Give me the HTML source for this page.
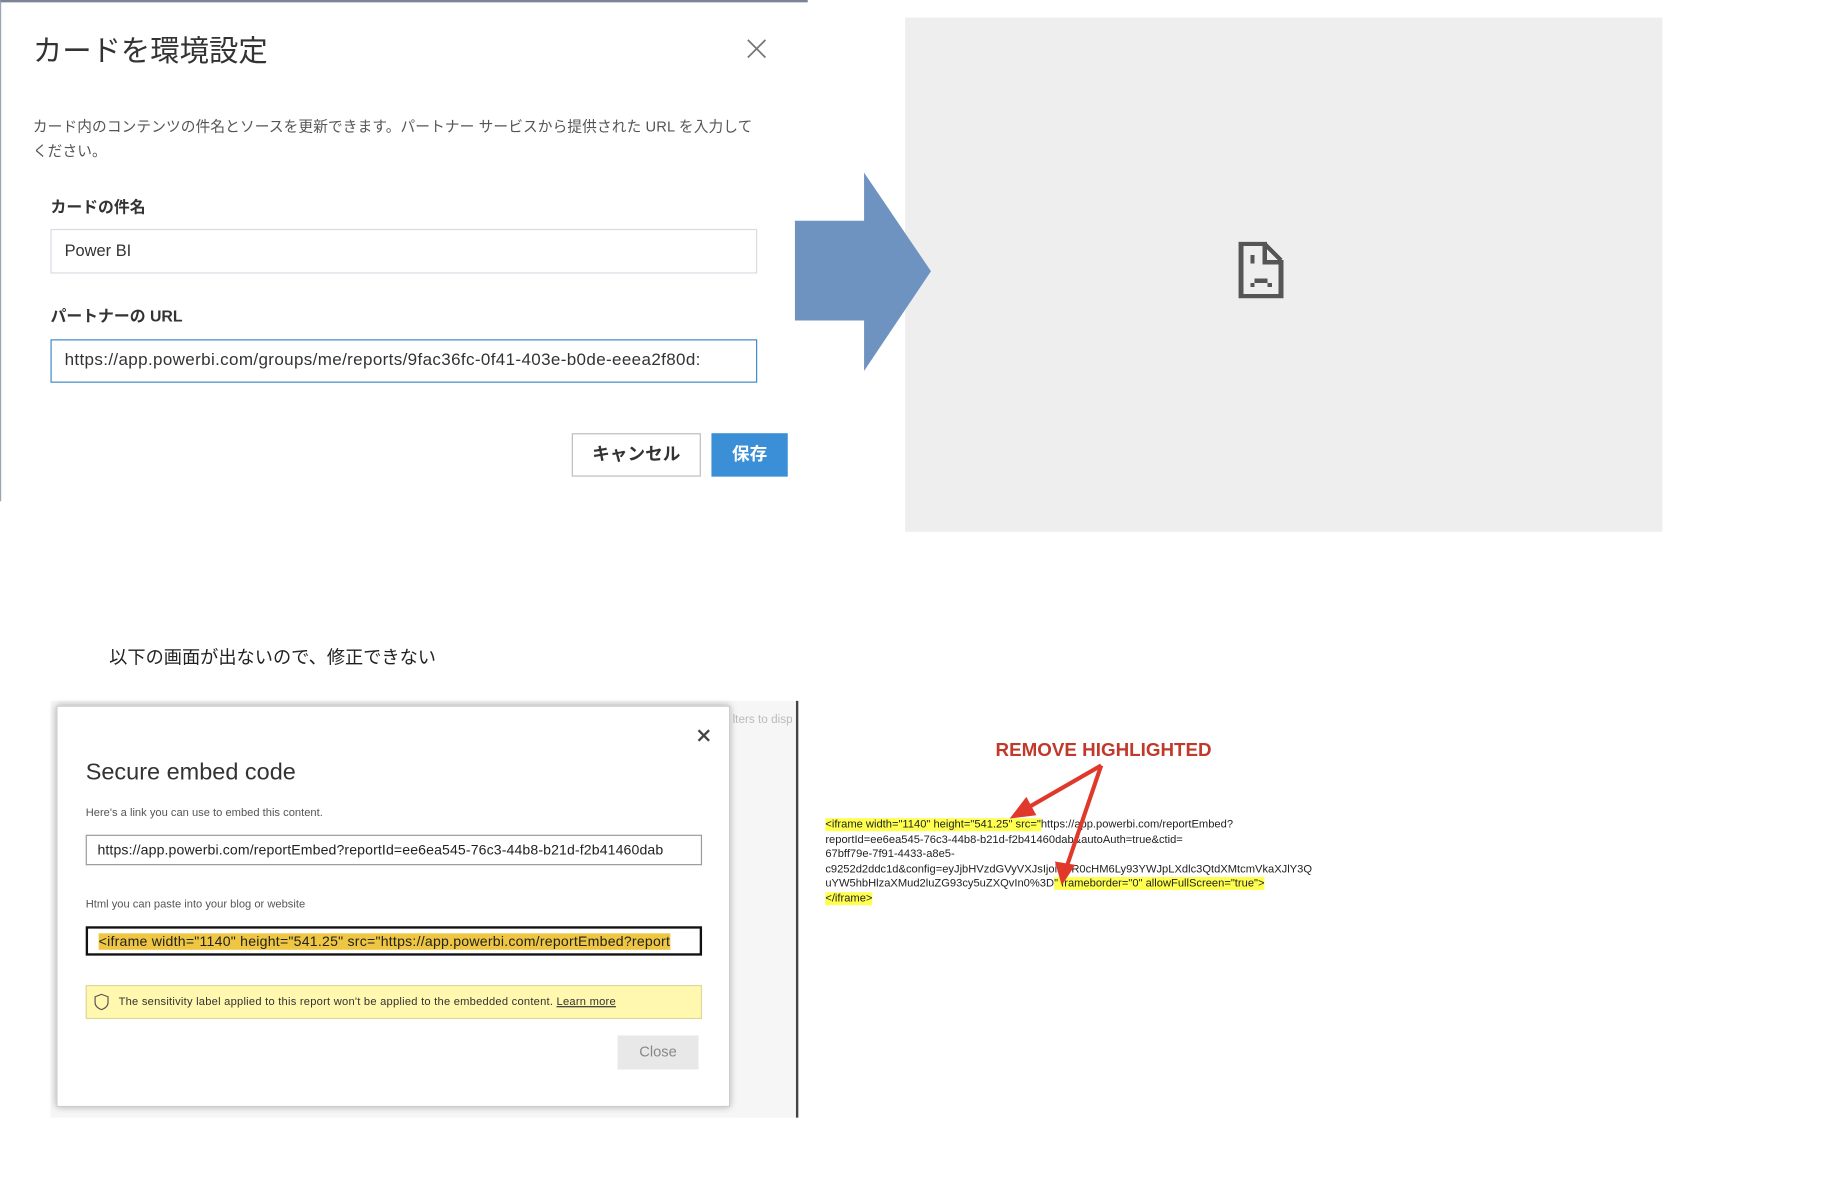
<!DOCTYPE html>
<html><head><meta charset="utf-8"><style>
html,body{margin:0;padding:0;background:#fff;width:1840px;height:1179px;overflow:hidden}
#s{position:absolute;left:0;top:0;width:1570px;height:1005px;transform:scale(1.174);transform-origin:0 0;font-family:"Liberation Sans","Noto Sans CJK JP",sans-serif;color:#333}
.a{position:absolute;white-space:nowrap}
.inp{position:absolute;box-sizing:border-box;background:#fff;overflow:hidden;white-space:nowrap}
</style></head><body><div id="s">
<div class="a" style="left:0;top:0;width:688px;height:427px;background:#fff;border-left:1px solid #9aa4b2;border-top:2px solid #7a8494;box-sizing:border-box"></div>
<div class="a" style="left:28px;top:24px;font-size:25px;color:#333">カードを環境設定</div>
<svg class="a" style="left:636px;top:33px" width="17" height="17"><path d="M1 1L16 16M16 1L1 16" stroke="#777" stroke-width="1.5"/></svg>
<div class="a" style="left:28px;top:98px;font-size:12.5px;color:#555;line-height:21px;letter-spacing:0.1px">カード内のコンテンツの件名とソースを更新できます。パートナー サービスから提供された URL を入力して<br>ください。</div>
<div class="a" style="left:43px;top:165px;font-size:13.5px;font-weight:bold;color:#333">カードの件名</div>
<div class="inp" style="left:43px;top:195px;width:602px;height:38px;border:1px solid #d7dce2;padding:9px 11px;font-size:14px;color:#333">Power BI</div>
<div class="a" style="left:43px;top:258px;font-size:13.5px;font-weight:bold;color:#333">パートナーの URL</div>
<div class="inp" style="left:43px;top:289px;width:602px;height:37px;border:1px solid #3d86c6;padding:9px 11px;font-size:14.5px;color:#333;letter-spacing:0.3px">https://app.powerbi.com/groups/me/reports/9fac36fc-0f41-403e-b0de-eeea2f80d:</div>
<div class="a" style="left:487px;top:369px;width:110px;height:37px;box-sizing:border-box;border:1px solid #bbb;background:#fff;font-size:15px;font-weight:bold;text-align:center;line-height:35px;color:#333">キャンセル</div>
<div class="a" style="left:606px;top:369px;width:65px;height:37px;background:#3a8fd6;color:#fff;font-size:15px;font-weight:bold;text-align:center;line-height:37px">保存</div>
<div class="a" style="left:771px;top:15px;width:645px;height:438px;background:#eeeeee"></div>
<svg class="a" style="left:677px;top:146px" width="118" height="172"><path d="M0 42H59V1L116 85L59 170V127H0Z" fill="#6f93c0"/></svg>
<svg class="a" style="left:1055px;top:206px" width="40" height="48" viewBox="0 0 45 55" shape-rendering="crispEdges"><path d="M2 2H25V20H41V53H2Z" fill="none" stroke="#555" stroke-width="4.5"/><path d="M25 2L41 18" stroke="#555" stroke-width="4"/><rect x="11" y="13" width="4" height="8" fill="#555"/><rect x="15" y="36" width="13" height="4" fill="#555"/><rect x="11" y="40" width="4" height="4" fill="#555"/><rect x="28" y="40" width="4" height="4" fill="#555"/></svg>
<div class="a" style="left:93px;top:548px;font-size:15.5px;color:#222">以下の画面が出ないので、修正できない</div>
<div class="a" style="left:43px;top:597px;width:636px;height:355px;background:#f6f6f6"></div>
<div class="a" style="left:678px;top:597px;width:2px;height:355px;background:#444"></div>
<div class="a" style="left:624px;top:608px;font-size:10px;color:#bbb">lters to disp</div>
<div class="a" style="left:48px;top:601px;width:574px;height:342px;background:#fff;box-shadow:0 0 6px rgba(0,0,0,.35);border:1px solid #ccc;box-sizing:border-box"></div>
<svg class="a" style="left:594px;top:621px" width="11" height="11"><path d="M1 1L10 10M10 1L1 10" stroke="#444" stroke-width="2"/></svg>
<div class="a" style="left:73px;top:647px;font-size:20px;color:#333">Secure embed code</div>
<div class="a" style="left:73px;top:687px;font-size:9.5px;color:#555">Here's a link you can use to embed this content.</div>
<div class="inp" style="left:73px;top:711px;width:525px;height:26px;border:1px solid #999;padding:5px 9px;font-size:12px;color:#222;letter-spacing:0.1px">https://app.powerbi.com/reportEmbed?reportId=ee6ea545-76c3-44b8-b21d-f2b41460dab</div>
<div class="a" style="left:73px;top:765px;font-size:9.5px;color:#555">Html you can paste into your blog or website</div>
<div class="inp" style="left:73px;top:789px;width:525px;height:25px;border:2px solid #111;padding:4px 9px;font-size:12px;color:#222;letter-spacing:0.2px"><span style="background:#eec641">&lt;iframe width="1140" height="541.25" src="https://app.powerbi.com/reportEmbed?report</span></div>
<div class="a" style="left:73px;top:839px;width:525px;height:29px;box-sizing:border-box;background:#fff8ae;border:1px solid #ddd79a"></div>
<svg class="a" style="left:80px;top:846px" width="13" height="15"><path d="M6.5 1L12 3V8C12 11 9 13 6.5 14C4 13 1 11 1 8V3Z" fill="none" stroke="#555" stroke-width="1"/></svg>
<div class="a" style="left:101px;top:848px;font-size:9.5px;color:#333;letter-spacing:0.2px">The sensitivity label applied to this report won't be applied to the embedded content. <u>Learn more</u></div>
<div class="a" style="left:526px;top:882px;width:69px;height:29px;background:#e8e8e8;color:#888;font-size:12.5px;text-align:center;line-height:29px">Close</div>
<div class="a" style="left:848px;top:631px;font-size:16px;font-weight:bold;color:#c0392b">REMOVE HIGHLIGHTED</div>
<div class="a" style="left:703px;top:697px;font-size:9.5px;line-height:12.5px;color:#222"><span style="background:#ffff4d">&lt;iframe width="1140" height="541.25" src="</span>https://app.powerbi.com/reportEmbed?<br>reportId=ee6ea545-76c3-44b8-b21d-f2b41460dab&amp;autoAuth=true&amp;ctid=<br>67bff79e-7f91-4433-a8e5-<br>c9252d2ddc1d&amp;config=eyJjbHVzdGVyVXJsIjoiaHR0cHM6Ly93YWJpLXdlc3QtdXMtcmVkaXJlY3Q<br>uYW5hbHlzaXMud2luZG93cy5uZXQvIn0%3D<span style="background:#ffff4d">" frameborder="0" allowFullScreen="true"&gt;</span><br><span style="background:#ffff4d">&lt;/iframe&gt;</span></div>
<svg class="a" style="left:850px;top:640px" width="110" height="120"><g stroke="#e0392b" stroke-width="3.5" fill="#e0392b"><path d="M88 12L22 50"/><path d="M88 12L58 100"/><path d="M14 55L24 42L30 53Z"/><path d="M55 110L51 96L63 98Z"/></g></svg>
</div></body></html>
